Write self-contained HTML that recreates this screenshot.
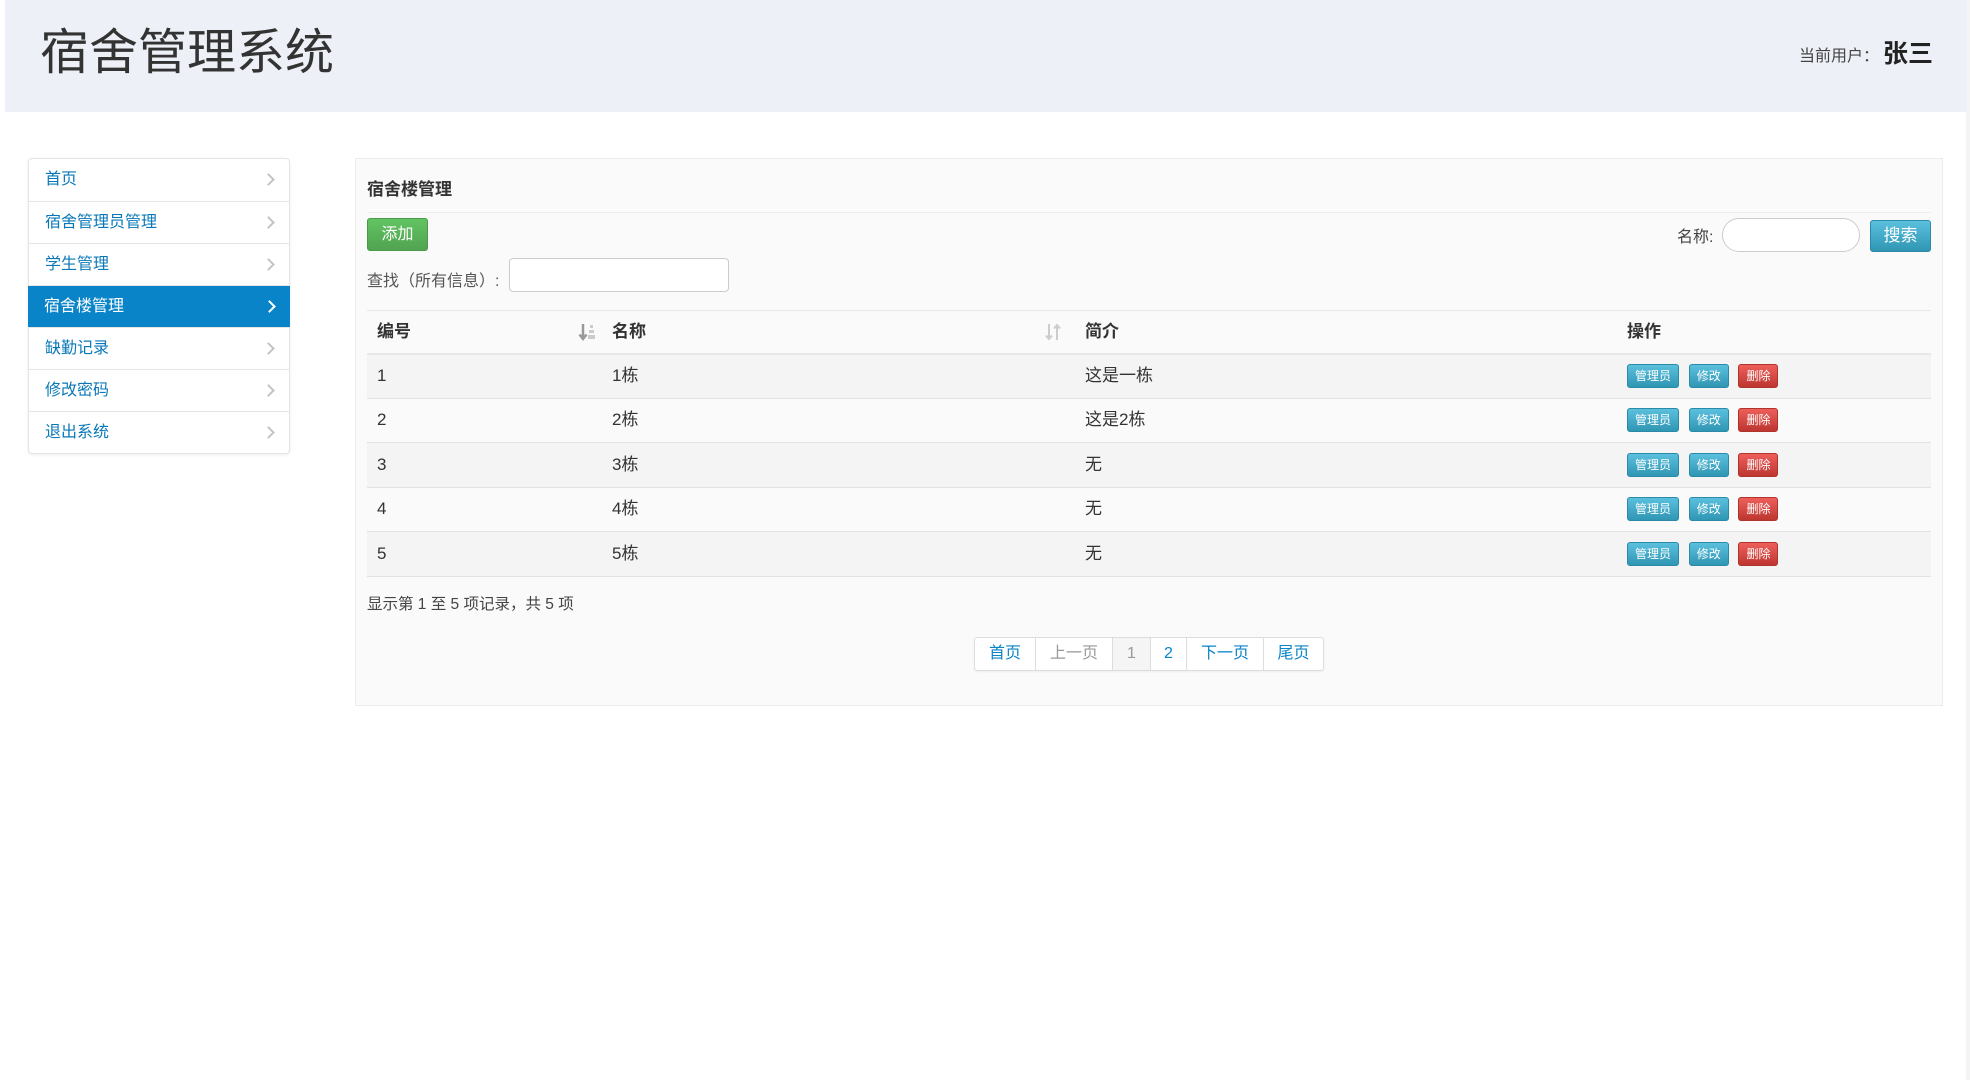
<!DOCTYPE html>
<html><head><meta charset="utf-8"><style>
*{margin:0;padding:0;box-sizing:border-box}
body{width:1970px;height:1080px;background:#fff;font-family:"Liberation Sans","Noto Sans CJK SC",sans-serif;color:#333;position:relative;overflow:hidden}
.abs{position:absolute}
.hdr{left:5px;top:0;width:1962px;height:112px;background:#edf1f7}
.title{left:40px;top:22px;font-size:49px;color:#333;line-height:62px}
.user{left:1799px;top:46px;font-size:16px;color:#444;line-height:22px}
.name{left:1883px;top:38px;font-size:25px;font-weight:bold;color:#222;line-height:32px}
.rline{left:1966px;top:0;width:4px;height:1080px;background:#f4f4f4}
.side{left:28px;top:158px;width:262px;border:1px solid #e5e5e5;border-radius:4px;box-shadow:0 1px 3px rgba(0,0,0,.08);background:#fff}
.side div{height:42px;line-height:42px;padding-left:16px;font-size:16px;color:#0a78b8;border-top:1px solid #e5e5e5;position:relative}
.side div:first-child{border-top:none}
.side div.act{background:#0a84c9;color:#fff;margin:0 -1px}
.side div::after{content:"";position:absolute;right:16px;top:16px;width:7px;height:7px;border-right:2px solid #c4c4c4;border-top:2px solid #c4c4c4;transform:rotate(45deg)}
.side div.act::after{border-color:#fff}
.panel{left:355px;top:158px;width:1588px;height:548px;background:#fafafa;border:1px solid #ececec}
.ptitle{left:367px;top:175px;font-size:17px;font-weight:bold;color:#333}
.sep{left:367px;top:212px;width:1564px;height:1px;background:#eee}
.btn{position:absolute;color:#fff;text-align:center;border-radius:3px}
.green{background:linear-gradient(#62c462,#51a351);border:1px solid #4a9a4a}
.info{background:linear-gradient(#5bc0de,#2f96b4);border:1px solid #2a8aa8}
.red{background:linear-gradient(#ee5f5b,#bd362f);border:1px solid #b0332c}
input{position:absolute;background:#fff;border:1px solid #ccc}
table{position:absolute;left:367px;top:310px;width:1564px;border-collapse:collapse;font-size:17px}
th{height:43px;text-align:left;font-weight:bold;background:#fafafa;border-top:1px solid #e8e8e8;border-bottom:2px solid #e8e8e8;padding-left:10px;vertical-align:middle;line-height:20px}
td{height:44.5px;border-top:1px solid #e2e2e2;padding-left:10px;position:relative;vertical-align:middle;line-height:20px}
tr.o td{background:#f4f4f4}
tbody tr:last-child td{border-bottom:1px solid #e2e2e2}
.sm{display:inline-block;height:24px;line-height:22px;font-size:12px;border-radius:3px;color:#fff;text-align:center;vertical-align:middle}
.pg{left:974px;top:637px;height:34px;display:flex;border:1px solid #ddd;border-radius:3px;background:#fff;box-shadow:0 1px 2px rgba(0,0,0,.05)}
.pg span{display:block;line-height:32px;font-size:16px;color:#0a84c9;text-align:center;border-left:1px solid #ddd}
.pg span:first-child{border-left:none}
.ic{float:right;margin-right:4px}
</style></head><body>
<div class="abs rline"></div>
<div class="abs hdr"></div>
<div class="abs title">宿舍管理系统</div>
<div class="abs user">当前用户：</div>
<div class="abs name">张三</div>

<div class="abs side">
<div>首页</div><div>宿舍管理员管理</div><div>学生管理</div><div class="act">宿舍楼管理</div><div>缺勤记录</div><div>修改密码</div><div>退出系统</div>
</div>

<div class="abs panel"></div>
<div class="abs ptitle">宿舍楼管理</div>
<div class="abs sep"></div>
<div class="btn green" style="left:367px;top:218px;width:61px;height:33px;line-height:31px;font-size:16px">添加</div>
<div class="abs" style="left:1677px;top:223px;font-size:16px;color:#444">名称:</div>
<input style="left:1722px;top:218px;width:138px;height:34px;border-radius:17px">
<div class="btn info" style="left:1870px;top:220px;width:61px;height:32px;line-height:30px;font-size:17px">搜索</div>
<div class="abs" style="left:367px;top:267px;font-size:16px;color:#555">查找（所有信息）:</div>
<input style="left:509px;top:258px;width:220px;height:34px;border-radius:4px">

<table>
<thead><tr><th style="width:235px">编号<svg class="ic" width="20" height="20" viewBox="0 0 20 20"><path d="M5 2v14M1.5 12.5L5 17l3.5-4.5" stroke="#999" stroke-width="2.5" fill="none"/><rect x="12" y="3" width="3" height="3" fill="#ccc"/><rect x="11" y="8" width="5" height="3" fill="#ccc"/><rect x="10" y="13" width="7" height="4" fill="#ccc"/></svg></th><th style="width:473px">名称<svg class="ic" width="20" height="20" viewBox="0 0 20 20" style="margin-right:12px"><path d="M6 2v15M3 13.5L6 17l3-3.5M14 18V3M11 6.5L14 3l3 3.5" stroke="#ccc" stroke-width="2" fill="none"/></svg></th><th style="width:542px">简介</th><th>操作</th></tr></thead>
<tbody>
<tr class="o"><td>1</td><td>1栋</td><td>这是一栋</td><td><span class="sm info" style="width:52px">管理员</span> <span class="sm info" style="width:40px;margin-left:5px">修改</span> <span class="sm red" style="width:40px;margin-left:5px">删除</span></td></tr>
<tr><td>2</td><td>2栋</td><td>这是2栋</td><td><span class="sm info" style="width:52px">管理员</span> <span class="sm info" style="width:40px;margin-left:5px">修改</span> <span class="sm red" style="width:40px;margin-left:5px">删除</span></td></tr>
<tr class="o"><td>3</td><td>3栋</td><td>无</td><td><span class="sm info" style="width:52px">管理员</span> <span class="sm info" style="width:40px;margin-left:5px">修改</span> <span class="sm red" style="width:40px;margin-left:5px">删除</span></td></tr>
<tr><td>4</td><td>4栋</td><td>无</td><td><span class="sm info" style="width:52px">管理员</span> <span class="sm info" style="width:40px;margin-left:5px">修改</span> <span class="sm red" style="width:40px;margin-left:5px">删除</span></td></tr>
<tr class="o"><td>5</td><td>5栋</td><td>无</td><td><span class="sm info" style="width:52px">管理员</span> <span class="sm info" style="width:40px;margin-left:5px">修改</span> <span class="sm red" style="width:40px;margin-left:5px">删除</span></td></tr>
</tbody></table>

<div class="abs" style="left:367px;top:592px;font-size:15.5px;color:#444">显示第 1 至 5 项记录，共 5 项</div>
<div class="abs pg">
<span style="width:60px">首页</span><span style="width:77px;color:#999">上一页</span><span style="width:38px;color:#999;background:#f5f5f5">1</span><span style="width:36px">2</span><span style="width:77px">下一页</span><span style="width:60px">尾页</span>
</div>
</body></html>
